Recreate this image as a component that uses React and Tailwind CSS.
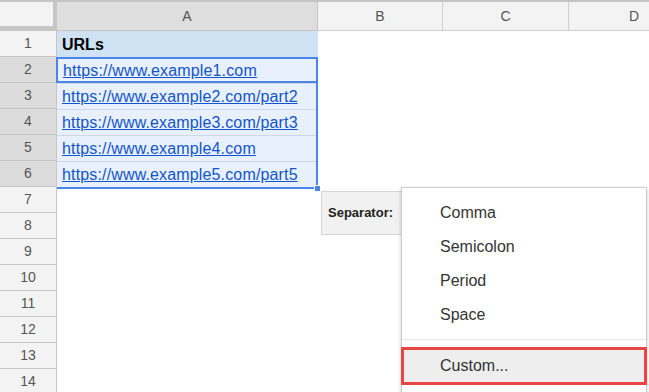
import React from "react";

const urls = [
  "https://www.example1.com",
  "https://www.example2.com/part2",
  "https://www.example3.com/part3",
  "https://www.example4.com",
  "https://www.example5.com/part5",
];

const options = ["Comma", "Semicolon", "Period", "Space"];

const RowHead = ({ n, picked }) => (
  <div
    className={
      "h-[26px] flex items-center justify-center border-b border-[#c6c6c6] text-[14px] text-[#555] " +
      (picked ? "bg-[#dcdcdc]" : "bg-[#f3f3f3]")
    }
  >
    {n}
  </div>
);

const App = () => {
  const rows = Array.from({ length: 14 }, (_, i) => i + 1);

  return (
    <div className="relative h-[392px] w-[649px] overflow-hidden bg-white font-['Liberation_Sans',Arial,sans-serif]">
      {/* column headers */}
      <div className="flex h-[31px] border-t-2 border-[#c4c4c4] bg-[#f3f3f3]">
        <div className="w-[57px] shrink-0 border-r-4 border-b-[5px] border-[#c6c6c6] bg-[#f3f3f3]" />
        <div className="w-[261px] shrink-0 flex items-center justify-center border-b border-r border-[#c6c6c6] bg-[#dedede] text-[14px] text-[#555]">
          A
        </div>
        <div className="w-[125px] shrink-0 flex items-center justify-center border-b border-r border-[#cfcfcf] text-[14px] text-[#555]">
          B
        </div>
        <div className="w-[126px] shrink-0 flex items-center justify-center border-b border-r border-[#cfcfcf] text-[14px] text-[#555]">
          C
        </div>
        <div className="flex-1 flex items-center justify-end pr-[10px] border-b border-[#cfcfcf] text-[14px] text-[#555]">
          D
        </div>
      </div>

      <div className="flex">
        {/* row headers */}
        <div className="w-[57px] shrink-0 border-r border-[#c6c6c6]">
          {rows.map((n) => (
            <RowHead key={n} n={n} picked={n >= 2 && n <= 6} />
          ))}
        </div>

        {/* column A */}
        <div className="w-[261px] shrink-0">
          <div className="h-[26px] flex items-end pb-[3px] pl-[5px] bg-[#cfe2f3] text-[16px] leading-[18px] font-bold text-black">
            URLs
          </div>
          <div className="relative border-r-2 border-b-2 border-[#4a86e8]">
            {urls.map((u, i) => (
              <div
                key={u}
                className={
                  "h-[26px] flex items-end pl-[5px] bg-[#e8f0fd] text-[16px] leading-[18px] tracking-[0.15px] text-[#1155cc] underline " +
                  (i === 0
                    ? "border-2 border-r-0 border-[#4a86e8] -ml-px pl-[4px] pb-[1px]"
                    : "border-t border-[#cdd8ea] pb-[3px]")
                }
              >
                {u}
              </div>
            ))}
            <div className="absolute -right-[5px] -bottom-[5px] h-[7px] w-[7px] bg-[#4a86e8] border border-white" />
          </div>
        </div>
        <div className="flex-1" />
      </div>

      {/* separator label */}
      <div className="absolute left-[321px] top-[191px] flex h-[44px] w-[81px] items-center border border-[#d4d4d4] bg-[#f1f1f1] pl-[6px] text-[13px] font-bold text-[#222]">
        Separator:
      </div>

      {/* dropdown menu */}
      <div className="absolute left-[401px] top-[187px] w-[246px] h-[220px] border border-[#cccccc] bg-white pt-[8px] shadow-[0_2px_4px_rgba(0,0,0,0.2)]">
        {options.map((o) => (
          <div key={o} className="flex h-[34px] items-center pl-[38px] text-[16px] text-[#333]">
            {o}
          </div>
        ))}
        <div className="my-[7px] border-t border-[#e5e5e5]" />
        <div className="-mx-px flex h-[38px] items-center border-[3px] border-[#e84545] bg-[#eeeeee] pl-[36px] text-[16px] text-[#333]">
          Custom...
        </div>
      </div>
    </div>
  );
};

export default App;
